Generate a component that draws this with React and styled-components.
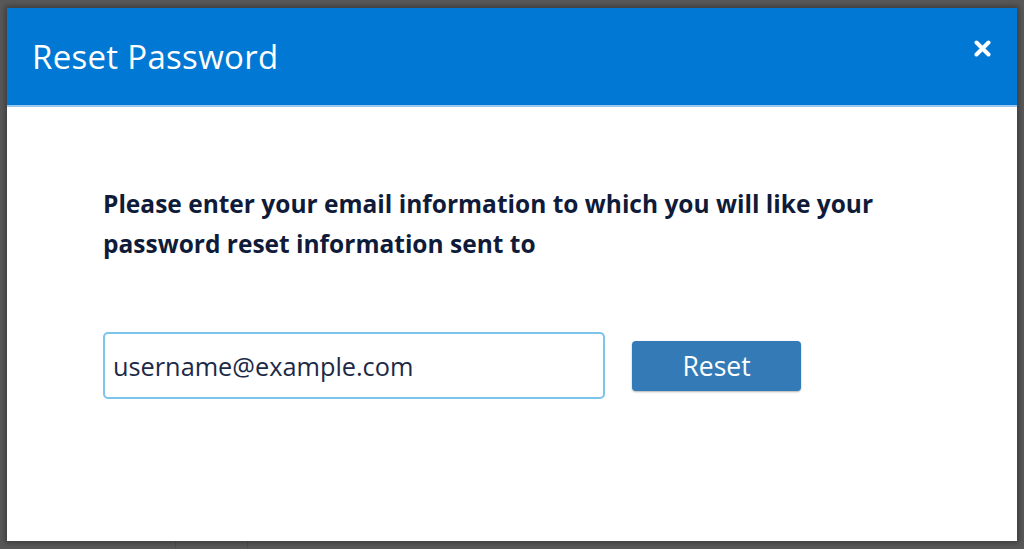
import React from 'react';
import styled, { createGlobalStyle } from 'styled-components';

const GlobalStyle = createGlobalStyle`
  html, body {
    margin: 0;
    padding: 0;
    background: #595959;
    font-family: "Open Sans", "Noto Sans", sans-serif;
  }
`

const Backdrop = styled.div`
  width: 1024px;
  height: 549px;
  padding: 8px 0 0 7px;
  box-sizing: border-box;
  background:
    linear-gradient(#4e4e4e, #4e4e4e) 175px 541px / 1px 8px no-repeat,
    linear-gradient(#4e4e4e, #4e4e4e) 247px 541px / 1px 8px no-repeat,
    #595959;
`

const Dialog = styled.div`
  width: 1010px;
  height: 533px;
  background: #fff;
  display: flex;
  flex-direction: column;
  box-shadow: 0 0 6px 2px rgba(0, 0, 0, 0.35);
`

const Header = styled.div`
  height: 97px;
  background: #0078d4;
  border-bottom: 2px solid #9cc8ef;
  display: flex;
  align-items: center;
  justify-content: space-between;
  padding: 0 26px 0 25px;
  box-sizing: content-box;
`

const Title = styled.h2`
  margin: 0;
  color: #fff;
  font-size: 33px;
  font-weight: 400;
  letter-spacing: 0.3px;
`

const Close = styled.button`
  border: 0;
  background: none;
  padding: 0;
  margin-top: -16px;
  cursor: pointer;
  display: flex;
`

const Body = styled.div`
  padding: 77px 96px 0 96px;
`

const Message = styled.p`
  margin: 0;
  max-width: 800px;
  color: #0f1b38;
  font-size: 24.5px;
  font-weight: 700;
  line-height: 40px;
`

const Row = styled.div`
  display: flex;
  align-items: center;
  gap: 27px;
  margin-top: 68px;
`

const EmailInput = styled.input`
  width: 502px;
  height: 67px;
  box-sizing: border-box;
  border: 2px solid #7cc4ea;
  border-radius: 5px;
  padding: 0 8px;
  font-family: inherit;
  font-size: 25.3px;
  color: #1c2a48;
  caret-color: #1c2a48;
  outline: none;
`

const Button = styled.button`
  width: 169px;
  height: 50px;
  border: 0;
  border-radius: 4px;
  background: #337ab7;
  color: #fff;
  font-family: inherit;
  font-size: 26.5px;
  box-shadow: 0 1px 2px rgba(0, 0, 0, 0.3);
  cursor: pointer;
`

const App = () => {
  return (
    <>
      <GlobalStyle />
      <Backdrop>
        <Dialog>
          <Header>
            <Title>Reset Password</Title>
            <Close aria-label="Close">
              <svg width="17" height="17" viewBox="0 0 17 17">
                <path d="M2.5 2.5 L14.5 14.5 M14.5 2.5 L2.5 14.5" stroke="#fff" strokeWidth="4" strokeLinecap="round" />
              </svg>
            </Close>
          </Header>
          <Body>
            <Message>
              Please enter your email information to which you will like your
              password reset information sent to
            </Message>
            <Row>
              <EmailInput defaultValue="username@example.com" autoFocus />
              <Button>Reset</Button>
            </Row>
          </Body>
        </Dialog>
      </Backdrop>
    </>
  );
}

export default App;
